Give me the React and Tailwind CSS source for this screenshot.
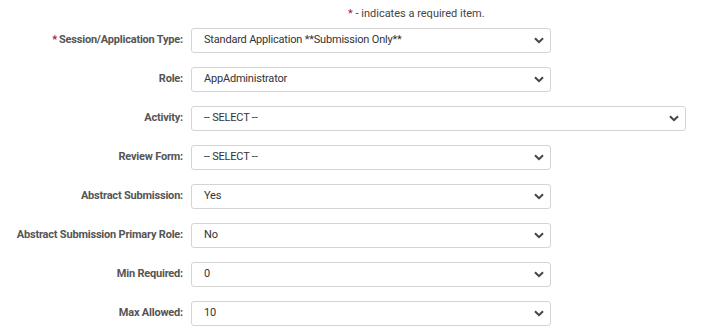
import React, { useState } from 'react';

const fields = [
  { label: 'Session/Application Type:', value: 'Standard Application **Submission Only**', required: true },
  { label: 'Role:', value: 'AppAdministrator' },
  { label: 'Activity:', value: '-- SELECT --', wide: true },
  { label: 'Review Form:', value: '-- SELECT --' },
  { label: 'Abstract Submission:', value: 'Yes' },
  { label: 'Abstract Submission Primary Role:', value: 'No' },
  { label: 'Min Required:', value: '0' },
  { label: 'Max Allowed:', value: '10' },
];

const Chevron = () => (
  <svg width="10" height="7" viewBox="0 0 10 7" className="shrink-0">
    <path d="M1 1.2 L5 5.2 L9 1.2" fill="none" stroke="#444" strokeWidth="2" />
  </svg>
);

const SelectBox = ({ value, wide }) => (
  <div
    className={`flex items-center justify-between h-[25px] border border-[#d4d4d4] rounded-[3px] bg-white pl-[12px] pr-[6px] ${
      wide ? 'w-[495px]' : 'w-[360px]'
    }`}
  >
    <span className="text-[11px] text-[#333] tracking-[-0.2px]">{value}</span>
    <Chevron />
  </div>
);

const App = () => {
  const [rows] = useState(fields);

  return (
    <div className="w-[702px] h-[334px] bg-white font-['Roboto',sans-serif] overflow-hidden">
      <div className="h-[28px] pt-[6px] pl-[348px] text-[11px] text-[#444] leading-[16px]">
        <span className="text-[#9c1a4a]">*</span> - indicates a required item.
      </div>

      <div className="flex flex-col gap-[14px]">
        {rows.map((f) => (
          <div key={f.label} className="flex items-center h-[25px]">
            <div className="w-[183px] text-right text-[11px] font-bold text-[#555] tracking-[-0.2px]">
              {f.required && <span className="text-[#9c1a4a] mr-[2px]">*</span>}
              {f.label}
            </div>
            <div className="ml-[8px]">
              <SelectBox value={f.value} wide={f.wide} />
            </div>
          </div>
        ))}
      </div>
    </div>
  );
};

export default App;
